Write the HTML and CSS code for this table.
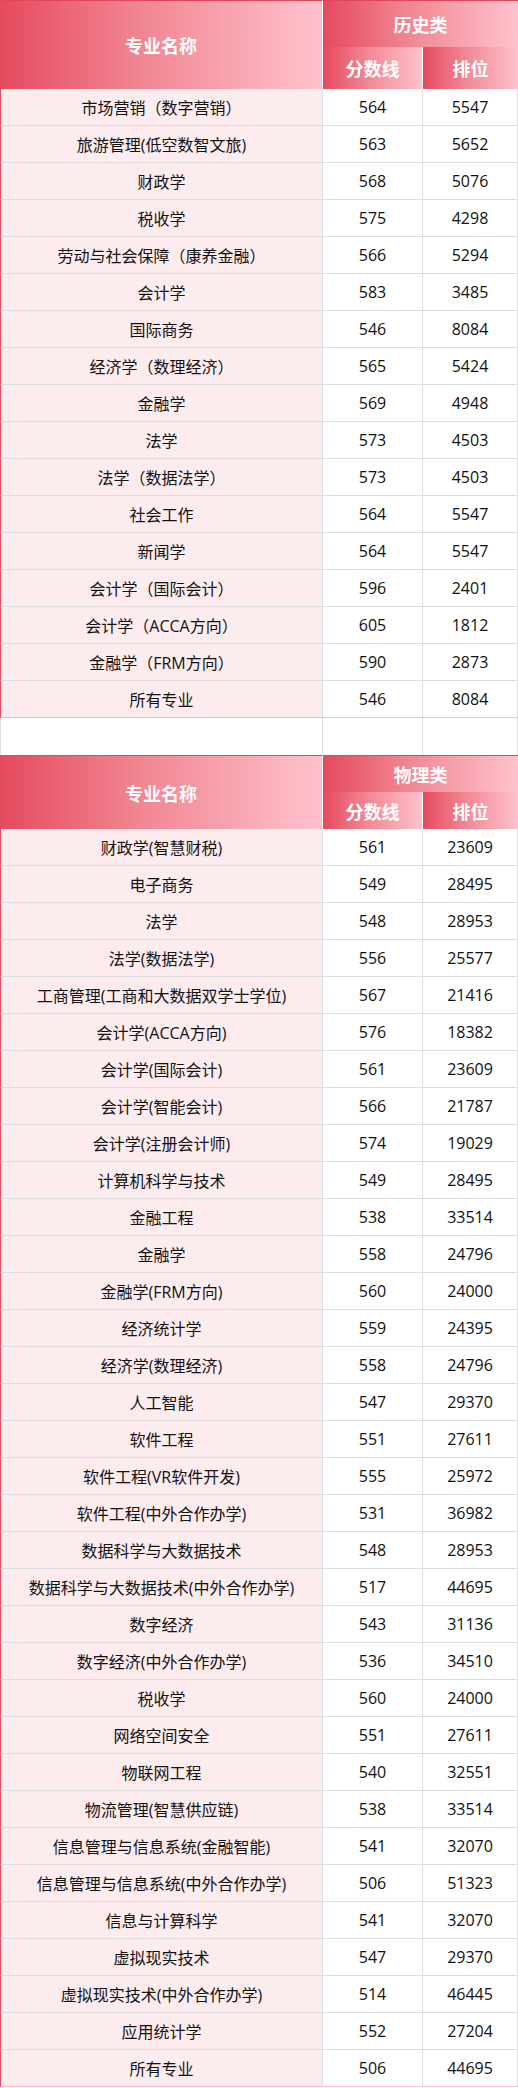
FILE: index.html
```html
<!DOCTYPE html>
<html lang="zh-CN">
<head>
<meta charset="utf-8">
<title>录取分数</title>
<link rel="stylesheet" href="styles.css">
</head>
<body>
<div class="sheet">
  <section class="block">
    <div class="head head-tall">
      <div class="h-name">专业名称</div>
      <div class="h-group">历史类</div>
      <div class="h-sub">分数线</div>
      <div class="h-sub h-last">排位</div>
    </div>
    <div class="row"><div class="c name">市场营销（数字营销）</div><div class="c">564</div><div class="c">5547</div></div>
    <div class="row"><div class="c name">旅游管理(低空数智文旅)</div><div class="c">563</div><div class="c">5652</div></div>
    <div class="row"><div class="c name">财政学</div><div class="c">568</div><div class="c">5076</div></div>
    <div class="row"><div class="c name">税收学</div><div class="c">575</div><div class="c">4298</div></div>
    <div class="row"><div class="c name">劳动与社会保障（康养金融）</div><div class="c">566</div><div class="c">5294</div></div>
    <div class="row"><div class="c name">会计学</div><div class="c">583</div><div class="c">3485</div></div>
    <div class="row"><div class="c name">国际商务</div><div class="c">546</div><div class="c">8084</div></div>
    <div class="row"><div class="c name">经济学（数理经济）</div><div class="c">565</div><div class="c">5424</div></div>
    <div class="row"><div class="c name">金融学</div><div class="c">569</div><div class="c">4948</div></div>
    <div class="row"><div class="c name">法学</div><div class="c">573</div><div class="c">4503</div></div>
    <div class="row"><div class="c name">法学（数据法学）</div><div class="c">573</div><div class="c">4503</div></div>
    <div class="row"><div class="c name">社会工作</div><div class="c">564</div><div class="c">5547</div></div>
    <div class="row"><div class="c name">新闻学</div><div class="c">564</div><div class="c">5547</div></div>
    <div class="row"><div class="c name">会计学（国际会计）</div><div class="c">596</div><div class="c">2401</div></div>
    <div class="row"><div class="c name">会计学（ACCA方向）</div><div class="c">605</div><div class="c">1812</div></div>
    <div class="row"><div class="c name">金融学（FRM方向）</div><div class="c">590</div><div class="c">2873</div></div>
    <div class="row row-last"><div class="c name">所有专业</div><div class="c">546</div><div class="c">8084</div></div>
  </section>

  <div class="spacer"><div class="s"></div><div class="s"></div><div class="s"></div></div>

  <section class="block">
    <div class="head">
      <div class="h-name">专业名称</div>
      <div class="h-group">物理类</div>
      <div class="h-sub">分数线</div>
      <div class="h-sub h-last">排位</div>
    </div>
    <div class="row"><div class="c name">财政学(智慧财税)</div><div class="c">561</div><div class="c">23609</div></div>
    <div class="row"><div class="c name">电子商务</div><div class="c">549</div><div class="c">28495</div></div>
    <div class="row"><div class="c name">法学</div><div class="c">548</div><div class="c">28953</div></div>
    <div class="row"><div class="c name">法学(数据法学)</div><div class="c">556</div><div class="c">25577</div></div>
    <div class="row"><div class="c name">工商管理(工商和大数据双学士学位)</div><div class="c">567</div><div class="c">21416</div></div>
    <div class="row"><div class="c name">会计学(ACCA方向)</div><div class="c">576</div><div class="c">18382</div></div>
    <div class="row"><div class="c name">会计学(国际会计)</div><div class="c">561</div><div class="c">23609</div></div>
    <div class="row"><div class="c name">会计学(智能会计)</div><div class="c">566</div><div class="c">21787</div></div>
    <div class="row"><div class="c name">会计学(注册会计师)</div><div class="c">574</div><div class="c">19029</div></div>
    <div class="row"><div class="c name">计算机科学与技术</div><div class="c">549</div><div class="c">28495</div></div>
    <div class="row"><div class="c name">金融工程</div><div class="c">538</div><div class="c">33514</div></div>
    <div class="row"><div class="c name">金融学</div><div class="c">558</div><div class="c">24796</div></div>
    <div class="row"><div class="c name">金融学(FRM方向)</div><div class="c">560</div><div class="c">24000</div></div>
    <div class="row"><div class="c name">经济统计学</div><div class="c">559</div><div class="c">24395</div></div>
    <div class="row"><div class="c name">经济学(数理经济)</div><div class="c">558</div><div class="c">24796</div></div>
    <div class="row"><div class="c name">人工智能</div><div class="c">547</div><div class="c">29370</div></div>
    <div class="row"><div class="c name">软件工程</div><div class="c">551</div><div class="c">27611</div></div>
    <div class="row"><div class="c name">软件工程(VR软件开发)</div><div class="c">555</div><div class="c">25972</div></div>
    <div class="row"><div class="c name">软件工程(中外合作办学)</div><div class="c">531</div><div class="c">36982</div></div>
    <div class="row"><div class="c name">数据科学与大数据技术</div><div class="c">548</div><div class="c">28953</div></div>
    <div class="row"><div class="c name">数据科学与大数据技术(中外合作办学)</div><div class="c">517</div><div class="c">44695</div></div>
    <div class="row"><div class="c name">数字经济</div><div class="c">543</div><div class="c">31136</div></div>
    <div class="row"><div class="c name">数字经济(中外合作办学)</div><div class="c">536</div><div class="c">34510</div></div>
    <div class="row"><div class="c name">税收学</div><div class="c">560</div><div class="c">24000</div></div>
    <div class="row"><div class="c name">网络空间安全</div><div class="c">551</div><div class="c">27611</div></div>
    <div class="row"><div class="c name">物联网工程</div><div class="c">540</div><div class="c">32551</div></div>
    <div class="row"><div class="c name">物流管理(智慧供应链)</div><div class="c">538</div><div class="c">33514</div></div>
    <div class="row"><div class="c name">信息管理与信息系统(金融智能)</div><div class="c">541</div><div class="c">32070</div></div>
    <div class="row"><div class="c name">信息管理与信息系统(中外合作办学)</div><div class="c">506</div><div class="c">51323</div></div>
    <div class="row"><div class="c name">信息与计算科学</div><div class="c">541</div><div class="c">32070</div></div>
    <div class="row"><div class="c name">虚拟现实技术</div><div class="c">547</div><div class="c">29370</div></div>
    <div class="row"><div class="c name">虚拟现实技术(中外合作办学)</div><div class="c">514</div><div class="c">46445</div></div>
    <div class="row"><div class="c name">应用统计学</div><div class="c">552</div><div class="c">27204</div></div>
    <div class="row row-last"><div class="c name">所有专业</div><div class="c">506</div><div class="c">44695</div></div>
  </section>
</div>
</body>
</html>
```

FILE: styles.css
```css
* { box-sizing: border-box; }

html, body {
  margin: 0;
  padding: 0;
  background: #ffffff;
}

body {
  font-family: "Open Sans", "Noto Sans CJK SC", sans-serif;
  color: #111111;
  width: 518px;
}

.sheet {
  width: 518px;
  display: flex;
  flex-direction: column;
}

.head {
  display: grid;
  grid-template-columns: 323px 100px 95px;
  grid-template-rows: 37px 37px;
  color: #ffffff;
  font-family: "Noto Sans CJK SC", sans-serif;
  font-weight: 700;
  font-size: 18px;
}

.head-tall {
  grid-template-rows: 47px 42px;
}

.head > div {
  display: flex;
  align-items: center;
  justify-content: center;
  background: linear-gradient(to right, #e54a5e 0%, #f18894 45%, #ffc2cc 100%);
}

.h-name {
  grid-row: 1 / 3;
  grid-column: 1;
  border-top: 1px solid #e04658;
  border-right: 1px solid #ffffff;
}

.h-group {
  grid-row: 1;
  grid-column: 2 / 4;
  border-top: 1px solid #e04658;
}

.h-sub {
  grid-row: 2;
  border-right: 1px solid #ffffff;
}

.h-sub.h-last {
  border-right: none;
}

.row {
  display: grid;
  grid-template-columns: 323px 100px 95px;
  height: 37px;
  font-size: 16px;
}

.c {
  display: flex;
  align-items: center;
  justify-content: center;
  border-right: 1px solid #dddddd;
  border-bottom: 1px solid #dddddd;
  background: #ffffff;
  white-space: nowrap;
}

.c.name {
  background: #fdecee;
  border-left: 1px solid #e5485c;
}

.row-last .c {
  border-bottom-color: #ffb8c4;
}

.spacer {
  display: grid;
  grid-template-columns: 323px 100px 95px;
  height: 37px;
}

.s {
  border-right: 1px solid #dddddd;
}

.s:first-child {
  border-left: 1px solid #dddddd;
}
```
